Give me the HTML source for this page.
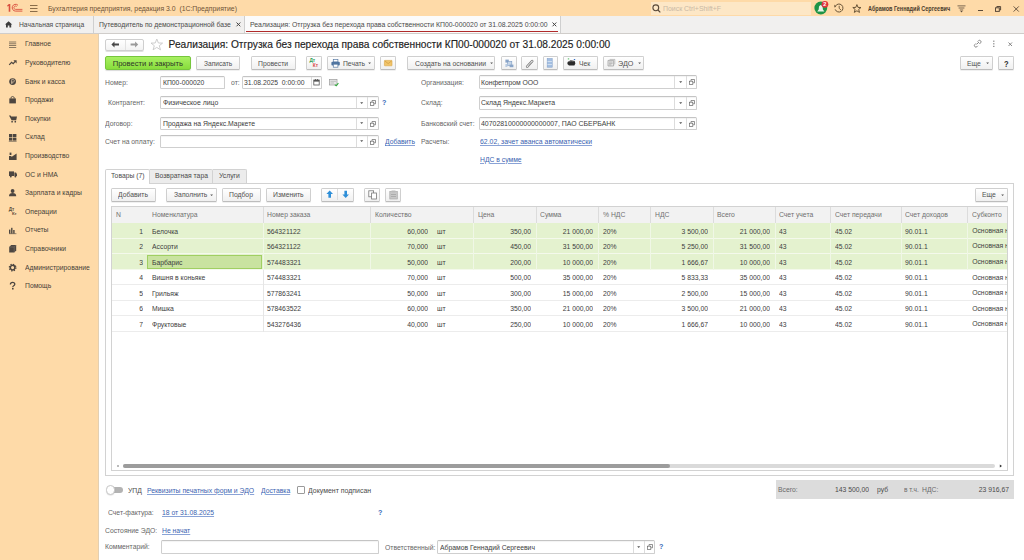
<!DOCTYPE html>
<html><head><meta charset="utf-8"><style>
html,body{margin:0;padding:0;width:1024px;height:560px;overflow:hidden;background:#fff;font-family:"Liberation Sans",sans-serif}
.r{position:absolute}
.t{position:absolute;white-space:pre}
svg{overflow:visible}
</style></head><body>
<div class="r" style="left:0.00px;top:0.00px;width:1024.00px;height:16.00px;background:#FEDAA8"></div>
<div class="r" style="left:0.00px;top:15.50px;width:1024.00px;height:0.50px;background:#e6c9a0"></div>
<svg class="r" style="left:6px;top:3px" width="17" height="10" viewBox="0 0 17 10"><path d="M1.2 2.4 L2.9 1 L4.3 1 L4.3 8.8 L2.7 8.8 L2.7 3.1 L1.2 3.5 Z" fill="#d9503f"/><path d="M12 2.3 A3.4 3.4 0 1 0 9.6 8.1 L16.4 8.1" fill="none" stroke="#d9503f" stroke-width="0.95"/><path d="M10.8 3.5 A1.7 1.7 0 1 0 9.6 6.4 L16.4 6.4" fill="none" stroke="#d9503f" stroke-width="0.85"/></svg>
<svg class="r" style="left:30px;top:5px" width="8" height="7" viewBox="0 0 8 7"><rect x="0" y="0" width="7.5" height="1" fill="#8a6d4a"/><rect x="0" y="3" width="7.5" height="1" fill="#8a6d4a"/><rect x="0" y="6" width="7.5" height="1" fill="#8a6d4a"/></svg>
<div class="t" style="left:47.50px;top:4.10px;font-size:7.64px;line-height:10px;color:#6e5237;transform:scaleX(0.9);transform-origin:0 50%;">Бухгалтерия предприятия, редакция 3.0  (1С:Предприятие)</div>
<div class="r" style="left:650.50px;top:2.00px;width:160.50px;height:13.00px;background:#FDE7C6"></div>
<svg class="r" style="left:652px;top:4px" width="9" height="9" viewBox="0 0 9 9"><circle cx="3.8" cy="3.8" r="2.9" fill="none" stroke="#5a4a3a" stroke-width="1.1"/><line x1="6" y1="6" x2="8.3" y2="8.3" stroke="#5a4a3a" stroke-width="1.2"/></svg>
<div class="t" style="left:662.75px;top:4.10px;font-size:7.69px;line-height:10px;color:#c9b9a5;transform:scaleX(0.9);transform-origin:0 50%;">Поиск Ctrl+Shift+F</div>
<svg class="r" style="left:813px;top:0px" width="16" height="16" viewBox="0 0 16 16"><circle cx="7.8" cy="8" r="6.4" fill="#1e9447"/><path d="M4.2 11.6 L11.4 11.6 L9.9 9.6 L9.6 6.6 Q7.8 3.6 6 6.6 L5.7 9.6 Z" fill="#e6f4e6"/><circle cx="11.9" cy="4.3" r="3.4" fill="#e0353a"/><text x="11.9" y="6.3" font-family="Liberation Sans" font-size="5.6" fill="#fff" text-anchor="middle" font-weight="bold">2</text></svg>
<svg class="r" style="left:834px;top:3px" width="10" height="10" viewBox="0 0 10 10"><path d="M1.4 3.2 A4 4 0 1 1 1.2 6.4" fill="none" stroke="#6a5538" stroke-width="1"/><path d="M0.2 1.6 L2.2 3.8 L0.4 4.4 Z" fill="#6a5538"/><path d="M5.2 2.8 L5.2 5.4 L7 7" fill="none" stroke="#6a5538" stroke-width="0.9"/></svg>
<svg class="r" style="left:852px;top:4px" width="10" height="10" viewBox="0 0 10 10"><path d="M4.9 0.6 L6 3.4 L9 3.5 L6.7 5.4 L7.5 8.4 L4.9 6.8 L2.3 8.4 L3.1 5.4 L0.8 3.5 L3.8 3.4 Z" fill="none" stroke="#6a5538" stroke-width="1"/></svg>
<div class="t" style="left:868.30px;top:4.20px;font-size:6.48px;line-height:10px;color:#4a3b2c;transform:scaleX(0.85);transform-origin:0 50%;font-weight:bold">Абрамов Геннадий Сергеевич</div>
<svg class="r" style="left:957px;top:5px" width="10" height="8" viewBox="0 0 10 8"><rect x="0.5" y="0.5" width="8" height="0.8" fill="#5a4a3a"/><rect x="1.6" y="2.6" width="5.8" height="0.8" fill="#5a4a3a"/><rect x="2.8" y="4.6" width="3.4" height="0.8" fill="#5a4a3a"/><path d="M3.3 6 L5.7 6 L4.5 7.6 Z" fill="#5a4a3a"/></svg>
<div class="r" style="left:977.50px;top:10.00px;width:5.00px;height:1.00px;background:#5a4a3a"></div>
<svg class="r" style="left:995px;top:6px" width="7" height="6" viewBox="0 0 7 6"><rect x="0.5" y="1.8" width="3.8" height="3.6" fill="none" stroke="#5a4a3a" stroke-width="1"/><path d="M1.8 1.6 L1.8 0.5 L5.6 0.5 L5.6 4 L4.5 4" fill="none" stroke="#5a4a3a" stroke-width="1"/></svg>
<svg class="r" style="left:1012.5px;top:5.5px" width="7" height="6" viewBox="0 0 7 6"><path d="M0.6 0.4 L5.8 5.6 M5.8 0.4 L0.6 5.6" stroke="#5a4a3a" stroke-width="0.9"/></svg>
<div class="r" style="left:0.00px;top:16.00px;width:1024.00px;height:17.00px;background:#f1f0ef"></div>
<div class="r" style="left:0.00px;top:33.00px;width:1024.00px;height:1.00px;background:#d0cdca"></div>
<svg class="r" style="left:5px;top:21px" width="8" height="7" viewBox="0 0 8 7"><path d="M3.6 0.2 L7.2 3.4 L6.2 3.4 L6.2 6.6 L4.4 6.6 L4.4 4.6 L2.8 4.6 L2.8 6.6 L1 6.6 L1 3.4 L0 3.4 Z" fill="#3d3d3d"/></svg>
<div class="t" style="left:19.40px;top:20.10px;font-size:7.49px;line-height:10px;color:#4a4a4a;transform:scaleX(0.9);transform-origin:0 50%;">Начальная страница</div>
<div class="r" style="left:93.00px;top:16.00px;width:1.00px;height:17.00px;background:#cfcfcf"></div>
<div class="t" style="left:99.00px;top:20.10px;font-size:7.54px;line-height:10px;color:#4a4a4a;transform:scaleX(0.9);transform-origin:0 50%;">Путеводитель по демонстрационной базе</div>
<svg class="r" style="left:236px;top:22px" width="5" height="5" viewBox="0 0 5 5"><path d="M0.5 0.5 L4.3 4.3 M4.3 0.5 L0.5 4.3" stroke="#444" stroke-width="1"/></svg>
<div class="r" style="left:244.00px;top:16.00px;width:1.00px;height:17.00px;background:#cfcfcf"></div>
<div class="r" style="left:245.00px;top:16.00px;width:315.00px;height:17.00px;background:#fbfbfb"></div>
<div class="t" style="left:250.00px;top:20.10px;font-size:7.63px;line-height:10px;color:#4a4a4a;transform:scaleX(0.9);transform-origin:0 50%;">Реализация: Отгрузка без перехода права собственности КП00-000020 от 31.08.2025 0:00:00</div>
<svg class="r" style="left:551.5px;top:22px" width="5" height="5" viewBox="0 0 5 5"><path d="M0.5 0.5 L4.3 4.3 M4.3 0.5 L0.5 4.3" stroke="#444" stroke-width="1"/></svg>
<div class="r" style="left:246.00px;top:30.80px;width:312.00px;height:1.00px;background:#b02a2a"></div>
<div class="r" style="left:560.00px;top:16.00px;width:1.00px;height:17.00px;background:#cfcfcf"></div>
<div class="r" style="left:0.00px;top:33.50px;width:98.50px;height:526.50px;background:#FEDAA8"></div>
<div class="r" style="left:98.00px;top:33.50px;width:1.00px;height:526.50px;background:#e3cfb2"></div>
<div class="t" style="left:24.75px;top:39.30px;font-size:7.56px;line-height:10px;color:#463f38;transform:scaleX(0.9);transform-origin:0 50%;">Главное</div>
<svg class="r" style="left:9px;top:40.5px" width="8" height="8" viewBox="0 0 8 8"><rect x="0" y="0.6" width="7.2" height="0.8" fill="#6f6250"/><rect x="0" y="2.4" width="7.2" height="0.8" fill="#6f6250"/><rect x="0" y="4.2" width="7.2" height="0.8" fill="#6f6250"/><rect x="0" y="6" width="7.2" height="0.8" fill="#6f6250"/></svg>
<div class="t" style="left:24.75px;top:57.90px;font-size:7.56px;line-height:10px;color:#463f38;transform:scaleX(0.9);transform-origin:0 50%;">Руководителю</div>
<svg class="r" style="left:9px;top:59.1px" width="8" height="8" viewBox="0 0 8 8"><path d="M0.2 5.8 L2.6 3.3 L4.2 4.6 L6.2 2.4" fill="none" stroke="#4d4640" stroke-width="1.2"/><path d="M4.4 1.2 L7.6 1.2 L7.6 4.4 Z" fill="#4d4640"/></svg>
<div class="t" style="left:24.75px;top:76.50px;font-size:7.56px;line-height:10px;color:#463f38;transform:scaleX(0.9);transform-origin:0 50%;">Банк и касса</div>
<svg class="r" style="left:9px;top:77.7px" width="8" height="8" viewBox="0 0 8 8"><circle cx="3.6" cy="3.6" r="3.4" fill="#4d4640"/><path d="M2.6 5.8 L2.6 1.6 L4.2 1.6 Q5.4 1.6 5.4 2.8 Q5.4 4 4.2 4 L2 4 M2 4.9 L4.2 4.9" fill="none" stroke="#c9b59a" stroke-width="0.8"/></svg>
<div class="t" style="left:24.75px;top:95.10px;font-size:7.56px;line-height:10px;color:#463f38;transform:scaleX(0.9);transform-origin:0 50%;">Продажи</div>
<svg class="r" style="left:9px;top:96.3px" width="8" height="8" viewBox="0 0 8 8"><rect x="0.3" y="2.4" width="6.6" height="5" fill="#4d4640"/><path d="M2 2.6 L2 1.3 Q3.6 -0.3 5.2 1.3 L5.2 2.6" fill="none" stroke="#4d4640" stroke-width="0.9"/></svg>
<div class="t" style="left:24.75px;top:113.70px;font-size:7.56px;line-height:10px;color:#463f38;transform:scaleX(0.9);transform-origin:0 50%;">Покупки</div>
<svg class="r" style="left:9px;top:114.9px" width="8" height="8" viewBox="0 0 8 8"><path d="M0 0.4 L1.6 0.4 L2.2 1.6 L8 1.6 L7.2 5.2 L2.6 5.2 Z" fill="#4d4640"/><circle cx="3.1" cy="6.7" r="0.85" fill="#4d4640"/><circle cx="6.3" cy="6.7" r="0.85" fill="#4d4640"/></svg>
<div class="t" style="left:24.75px;top:132.30px;font-size:7.56px;line-height:10px;color:#463f38;transform:scaleX(0.9);transform-origin:0 50%;">Склад</div>
<svg class="r" style="left:9px;top:133.5px" width="8" height="8" viewBox="0 0 8 8"><rect x="0" y="0" width="3.4" height="3" fill="#4d4640"/><rect x="4" y="0" width="3.4" height="3" fill="#4d4640"/><rect x="0" y="3.6" width="3.4" height="3" fill="#4d4640"/><rect x="4" y="3.6" width="3.4" height="3" fill="#4d4640"/><rect x="-0.2" y="6.9" width="7.8" height="0.6" fill="#4d4640"/></svg>
<div class="t" style="left:24.75px;top:150.90px;font-size:7.56px;line-height:10px;color:#463f38;transform:scaleX(0.9);transform-origin:0 50%;">Производство</div>
<svg class="r" style="left:9px;top:152.1px" width="8" height="8" viewBox="0 0 8 8"><path d="M0 8 L0 4 L2.4 4 L2.4 5 L7.6 1.6 L7.6 8 Z" fill="#4d4640"/><rect x="0.6" y="0.6" width="1.8" height="2.4" fill="#4d4640"/></svg>
<div class="t" style="left:24.75px;top:169.50px;font-size:7.56px;line-height:10px;color:#463f38;transform:scaleX(0.9);transform-origin:0 50%;">ОС и НМА</div>
<svg class="r" style="left:9px;top:170.7px" width="8" height="8" viewBox="0 0 8 8"><rect x="0" y="0.4" width="5" height="4.6" fill="#4d4640"/><path d="M5.4 1.6 L7 1.6 L8 3.2 L8 5 L5.4 5 Z" fill="#4d4640"/><circle cx="1.8" cy="5.6" r="0.95" fill="#4d4640"/><circle cx="6.4" cy="5.6" r="0.95" fill="#4d4640"/></svg>
<div class="t" style="left:24.75px;top:188.10px;font-size:7.56px;line-height:10px;color:#463f38;transform:scaleX(0.9);transform-origin:0 50%;">Зарплата и кадры</div>
<svg class="r" style="left:9px;top:189.3px" width="8" height="8" viewBox="0 0 8 8"><circle cx="3.6" cy="2" r="1.9" fill="#4d4640"/><path d="M0 7.2 Q0 4 3.6 4 Q7.2 4 7.2 7.2 Z" fill="#4d4640"/></svg>
<div class="t" style="left:24.75px;top:206.70px;font-size:7.56px;line-height:10px;color:#463f38;transform:scaleX(0.9);transform-origin:0 50%;">Операции</div>
<svg class="r" style="left:9px;top:207.9px" width="8" height="8" viewBox="0 0 8 8"><text x="-0.2" y="2.9" font-size="4.6" fill="#5a4a38" font-family="Liberation Sans" font-weight="bold">Дт</text><text x="3" y="7.1" font-size="4.3" fill="#5a4a38" font-family="Liberation Sans" font-weight="bold">Кт</text></svg>
<div class="t" style="left:24.75px;top:225.30px;font-size:7.56px;line-height:10px;color:#463f38;transform:scaleX(0.9);transform-origin:0 50%;">Отчеты</div>
<svg class="r" style="left:9px;top:226.5px" width="8" height="8" viewBox="0 0 8 8"><rect x="0" y="2.6" width="1.4" height="4" fill="#4d4640"/><rect x="2.1" y="0.8" width="1.4" height="5.8" fill="#4d4640"/><rect x="4.2" y="3" width="1.4" height="3.6" fill="#4d4640"/><rect x="0" y="6.5" width="7.4" height="0.6" fill="#4d4640"/></svg>
<div class="t" style="left:24.75px;top:243.90px;font-size:7.56px;line-height:10px;color:#463f38;transform:scaleX(0.9);transform-origin:0 50%;">Справочники</div>
<svg class="r" style="left:9px;top:245.1px" width="8" height="8" viewBox="0 0 8 8"><path d="M0.2 2 L2.2 0 L7.2 0 L7.2 5.4 L5.2 7.4 L0.2 7.4 Z" fill="#4d4640"/><path d="M5.2 2 L5.2 7.4 M0.2 2 L5.2 2 L7.2 0" fill="none" stroke="#8a7e72" stroke-width="0.5"/></svg>
<div class="t" style="left:24.75px;top:262.50px;font-size:7.56px;line-height:10px;color:#463f38;transform:scaleX(0.9);transform-origin:0 50%;">Администрирование</div>
<svg class="r" style="left:9px;top:263.7px" width="8" height="8" viewBox="0 0 8 8"><circle cx="3.6" cy="3.6" r="2.3" fill="none" stroke="#4d4640" stroke-width="1.5"/><circle cx="3.6" cy="3.6" r="3.3" fill="none" stroke="#4d4640" stroke-width="1.2" stroke-dasharray="1.3 1.29"/></svg>
<div class="t" style="left:24.75px;top:281.10px;font-size:7.56px;line-height:10px;color:#463f38;transform:scaleX(0.9);transform-origin:0 50%;">Помощь</div>
<svg class="r" style="left:9px;top:282.3px" width="8" height="8" viewBox="0 0 8 8"><path d="M1.4 2.4 Q1.4 0.4 3.6 0.4 Q5.8 0.4 5.8 2.3 Q5.8 3.4 4.4 4 Q3.8 4.3 3.8 5.2" fill="none" stroke="#4d4640" stroke-width="1.3"/><rect x="3" y="6" width="1.6" height="1.5" fill="#4d4640"/></svg>
<div class="r" style="left:105.00px;top:38.50px;width:39.00px;height:12.00px;background:linear-gradient(#fff,#f3f3f3);border:1px solid #cfcfcf;border-radius:2px;box-sizing:border-box;box-shadow:0 1px 0 #e0e0e0"></div>
<div class="r" style="left:124.50px;top:39.50px;width:1.00px;height:10.00px;background:#e2e2e2"></div>
<svg class="r" style="left:111px;top:41px" width="9" height="7" viewBox="0 0 9 7"><path d="M0.4 3.5 L3.5 0.6 L3.5 2.6 L8 2.6 L8 4.4 L3.5 4.4 L3.5 6.4 Z" fill="#474747"/></svg>
<svg class="r" style="left:130px;top:41px" width="9" height="7" viewBox="0 0 9 7"><path d="M8.2 3.5 L5.1 0.6 L5.1 2.6 L0.6 2.6 L0.6 4.4 L5.1 4.4 L5.1 6.4 Z" fill="#9a9a9a" transform="scale(1,1)"/></svg>
<svg class="r" style="left:150px;top:38px" width="14" height="13" viewBox="0 0 14 13"><path d="M6.8 1 L8.4 5 L12.6 5.1 L9.3 7.7 L10.5 11.8 L6.8 9.4 L3.1 11.8 L4.3 7.7 L1 5.1 L5.2 5 Z" fill="none" stroke="#c8c8c8" stroke-width="0.9"/></svg>
<div class="t" style="left:168.60px;top:37.50px;font-size:10.20px;line-height:14px;color:#222222;transform-origin:0 50%;-webkit-text-stroke:0.15px #222">Реализация: Отгрузка без перехода права собственности КП00-000020 от 31.08.2025 0:00:00</div>
<svg class="r" style="left:973px;top:40px" width="10" height="8" viewBox="0 0 10 8"><path d="M3.6 4.4 L6 2" stroke="#7a7a7a" stroke-width="0.9"/><path d="M4.6 1.6 L5.6 0.6 Q6.6 -0.2 7.6 0.8 Q8.6 1.8 7.6 2.8 L6.4 4" fill="none" stroke="#7a7a7a" stroke-width="0.9"/><path d="M4.8 5.8 L3.8 6.8 Q2.8 7.6 1.8 6.6 Q0.8 5.6 1.8 4.6 L3 3.4" fill="none" stroke="#7a7a7a" stroke-width="0.9"/></svg>
<svg class="r" style="left:993px;top:40px" width="2" height="8" viewBox="0 0 2 8"><rect x="0.2" y="0.6" width="1.2" height="1.2" fill="#7a7a7a"/><rect x="0.2" y="3.2" width="1.2" height="1.2" fill="#7a7a7a"/><rect x="0.2" y="5.8" width="1.2" height="1.2" fill="#7a7a7a"/></svg>
<svg class="r" style="left:1008px;top:41.5px" width="5" height="5" viewBox="0 0 5 5"><path d="M0.5 0.5 L4 4 M4 0.5 L0.5 4" stroke="#7a7a7a" stroke-width="0.9"/></svg>
<div class="r" style="left:105.00px;top:56.00px;width:86.00px;height:14.00px;background:linear-gradient(#a8f062,#88dd3c);border:1px solid #76c63c;border-radius:2px;box-sizing:border-box;box-shadow:0 1px 1px rgba(0,0,0,0.15)"></div>
<div class="t" style="left:112.70px;top:58.60px;font-size:7.60px;line-height:10px;color:#2e3628;transform-origin:0 50%;">Провести и закрыть</div>
<div class="r" style="left:196.00px;top:56.00px;width:44.00px;height:14.00px;background:linear-gradient(#ffffff,#f0f0f0);border:1px solid #cfcfcf;border-bottom-color:#bdbdbd;border-radius:1.5px;box-sizing:border-box;box-shadow:0 1px 0 rgba(0,0,0,0.06)"></div>
<div class="t" style="left:203.70px;top:58.60px;font-size:7.36px;line-height:10px;color:#505050;transform:scaleX(0.9);transform-origin:0 50%;">Записать</div>
<div class="r" style="left:251.00px;top:56.00px;width:45.00px;height:14.00px;background:linear-gradient(#ffffff,#f0f0f0);border:1px solid #cfcfcf;border-bottom-color:#bdbdbd;border-radius:1.5px;box-sizing:border-box;box-shadow:0 1px 0 rgba(0,0,0,0.06)"></div>
<div class="t" style="left:258.00px;top:58.60px;font-size:7.59px;line-height:10px;color:#505050;transform:scaleX(0.9);transform-origin:0 50%;">Провести</div>
<div class="r" style="left:306.00px;top:56.00px;width:16.00px;height:14.00px;background:linear-gradient(#ffffff,#f0f0f0);border:1px solid #cfcfcf;border-bottom-color:#bdbdbd;border-radius:1.5px;box-sizing:border-box;box-shadow:0 1px 0 rgba(0,0,0,0.06)"></div>
<svg class="r" style="left:308px;top:58px" width="12" height="10" viewBox="0 0 12 10"><text x="1.4" y="4.4" font-size="4.8" fill="#2f9e55" font-family="Liberation Sans" font-weight="bold">Дт</text><text x="4.8" y="9" font-size="4.8" fill="#d84848" font-family="Liberation Sans" font-weight="bold">Кт</text></svg>
<div class="r" style="left:327.00px;top:56.00px;width:48.00px;height:14.00px;background:linear-gradient(#ffffff,#f0f0f0);border:1px solid #cfcfcf;border-bottom-color:#bdbdbd;border-radius:1.5px;box-sizing:border-box;box-shadow:0 1px 0 rgba(0,0,0,0.06)"></div>
<svg class="r" style="left:330.5px;top:58.5px" width="10" height="9" viewBox="0 0 10 9"><rect x="2.3" y="0.6" width="4.6" height="2.4" fill="#fff" stroke="#5a7ca5" stroke-width="0.7"/><rect x="0.4" y="2.8" width="8.4" height="3.8" rx="1" fill="#4f74a0"/><rect x="2.3" y="5.2" width="4.6" height="3" fill="#fff" stroke="#5a7ca5" stroke-width="0.7"/></svg>
<div class="t" style="left:342.70px;top:58.60px;font-size:7.50px;line-height:10px;color:#505050;transform:scaleX(0.9);transform-origin:0 50%;">Печать</div>
<svg class="r" style="left:368px;top:62px" width="4" height="3" viewBox="0 0 4 3"><path d="M0.2 0.6 L3 0.6 L1.6 2 Z" fill="#555"/></svg>
<div class="r" style="left:380.00px;top:56.00px;width:16.00px;height:14.00px;background:linear-gradient(#ffffff,#f0f0f0);border:1px solid #cfcfcf;border-bottom-color:#bdbdbd;border-radius:1.5px;box-sizing:border-box;box-shadow:0 1px 0 rgba(0,0,0,0.06)"></div>
<svg class="r" style="left:383.8px;top:60px" width="9" height="7" viewBox="0 0 9 7"><rect x="0.4" y="0.4" width="7.6" height="5.4" rx="0.5" fill="#f1c469" stroke="#d9a543" stroke-width="0.6"/><path d="M0.8 0.9 L4.2 3.6 L7.6 0.9" fill="none" stroke="#c8923a" stroke-width="0.6"/></svg>
<div class="r" style="left:407.00px;top:56.00px;width:88.00px;height:14.00px;background:linear-gradient(#ffffff,#f0f0f0);border:1px solid #cfcfcf;border-bottom-color:#bdbdbd;border-radius:1.5px;box-sizing:border-box;box-shadow:0 1px 0 rgba(0,0,0,0.06)"></div>
<div class="t" style="left:414.60px;top:58.60px;font-size:7.61px;line-height:10px;color:#505050;transform:scaleX(0.9);transform-origin:0 50%;">Создать на основании</div>
<svg class="r" style="left:489.5px;top:62px" width="4" height="3" viewBox="0 0 4 3"><path d="M0.2 0.6 L3 0.6 L1.6 2 Z" fill="#555"/></svg>
<div class="r" style="left:501.00px;top:56.00px;width:16.00px;height:14.00px;background:linear-gradient(#ffffff,#f0f0f0);border:1px solid #cfcfcf;border-bottom-color:#bdbdbd;border-radius:1.5px;box-sizing:border-box;box-shadow:0 1px 0 rgba(0,0,0,0.06)"></div>
<svg class="r" style="left:504.5px;top:58.5px" width="9" height="9" viewBox="0 0 9 9"><rect x="0.4" y="0.6" width="3.4" height="3" fill="#8aa5c8"/><rect x="2.6" y="2.4" width="4.2" height="4" fill="#c5d5e8" stroke="#7d9bc2" stroke-width="0.6"/><rect x="4.6" y="5.6" width="3.8" height="2.6" fill="#8aa5c8"/><rect x="0.4" y="5" width="2" height="3" fill="#b8cbe2"/></svg>
<div class="r" style="left:521.00px;top:56.00px;width:17.00px;height:14.00px;background:linear-gradient(#ffffff,#f0f0f0);border:1px solid #cfcfcf;border-bottom-color:#bdbdbd;border-radius:1.5px;box-sizing:border-box;box-shadow:0 1px 0 rgba(0,0,0,0.06)"></div>
<svg class="r" style="left:524.5px;top:58.5px" width="10" height="9" viewBox="0 0 10 9"><path d="M2.2 7.6 L7.2 2.2" stroke="#7a7a7a" stroke-width="2.6" stroke-linecap="round"/><path d="M2.2 7.6 L7.2 2.2" stroke="#f4f4f4" stroke-width="1.1" stroke-linecap="round"/><path d="M3.4 6.6 L6.4 3.2" stroke="#7a7a7a" stroke-width="0.6"/></svg>
<div class="r" style="left:543.00px;top:56.00px;width:15.00px;height:14.00px;background:linear-gradient(#ffffff,#f0f0f0);border:1px solid #cfcfcf;border-bottom-color:#bdbdbd;border-radius:1.5px;box-sizing:border-box;box-shadow:0 1px 0 rgba(0,0,0,0.06)"></div>
<svg class="r" style="left:546px;top:58px" width="8" height="10" viewBox="0 0 8 10"><rect x="1.2" y="0.6" width="5" height="8.6" fill="#a4bfe2" stroke="#86a3cc" stroke-width="0.6"/><rect x="1.5" y="3" width="4.4" height="0.7" fill="#e4ecf6"/><rect x="1.5" y="6" width="4.4" height="0.7" fill="#e4ecf6"/></svg>
<div class="r" style="left:563.00px;top:56.00px;width:35.00px;height:14.00px;background:linear-gradient(#ffffff,#f0f0f0);border:1px solid #cfcfcf;border-bottom-color:#bdbdbd;border-radius:1.5px;box-sizing:border-box;box-shadow:0 1px 0 rgba(0,0,0,0.06)"></div>
<svg class="r" style="left:566.5px;top:58px" width="10" height="9" viewBox="0 0 10 9"><path d="M0.6 4 L3.6 2.2 L7.6 3 L8.4 5.6 L7.4 7.6 L2 7.6 L0.4 6 Z" fill="#2b2b2b"/><path d="M2.2 3.8 L4 2.8 L6.6 3.4" fill="none" stroke="#9a9a9a" stroke-width="0.6"/><rect x="0.8" y="0.4" width="1.4" height="1" fill="#49b85a"/><rect x="6.8" y="1" width="1.4" height="1.1" fill="#3a72c8"/></svg>
<div class="t" style="left:579.20px;top:58.60px;font-size:7.56px;line-height:10px;color:#505050;transform:scaleX(0.9);transform-origin:0 50%;">Чек</div>
<div class="r" style="left:603.00px;top:56.00px;width:41.00px;height:14.00px;background:linear-gradient(#ffffff,#f0f0f0);border:1px solid #cfcfcf;border-bottom-color:#bdbdbd;border-radius:1.5px;box-sizing:border-box;box-shadow:0 1px 0 rgba(0,0,0,0.06)"></div>
<svg class="r" style="left:606.5px;top:59px" width="9" height="8" viewBox="0 0 9 8"><path d="M1 1.4 L6.6 1.4 L6.6 7 L1 7 Z" fill="#e8e8e8" stroke="#9a9a9a" stroke-width="0.7"/><path d="M2.6 0.4 L7.8 0.4 L7.8 5.4" fill="none" stroke="#9a9a9a" stroke-width="0.6"/><path d="M2 3 L5.6 3 M2 4.4 L5.6 4.4 M2 5.8 L4.4 5.8" stroke="#8a8a8a" stroke-width="0.5"/></svg>
<div class="t" style="left:618.40px;top:58.60px;font-size:8.00px;line-height:10px;color:#505050;transform:scaleX(0.9);transform-origin:0 50%;">ЭДО</div>
<svg class="r" style="left:638px;top:62px" width="4" height="3" viewBox="0 0 4 3"><path d="M0.2 0.6 L3 0.6 L1.6 2 Z" fill="#555"/></svg>
<div class="r" style="left:960.00px;top:56.00px;width:33.00px;height:14.00px;background:linear-gradient(#ffffff,#f0f0f0);border:1px solid #cfcfcf;border-bottom-color:#bdbdbd;border-radius:1.5px;box-sizing:border-box;box-shadow:0 1px 0 rgba(0,0,0,0.06)"></div>
<div class="t" style="left:966.50px;top:58.60px;font-size:7.56px;line-height:10px;color:#505050;transform:scaleX(0.9);transform-origin:0 50%;">Еще</div>
<svg class="r" style="left:986px;top:62px" width="4" height="3" viewBox="0 0 4 3"><path d="M0.2 0.6 L3 0.6 L1.6 2 Z" fill="#555"/></svg>
<div class="r" style="left:998.00px;top:56.00px;width:16.00px;height:14.00px;background:linear-gradient(#ffffff,#f0f0f0);border:1px solid #cfcfcf;border-bottom-color:#bdbdbd;border-radius:1.5px;box-sizing:border-box;box-shadow:0 1px 0 rgba(0,0,0,0.06)"></div>
<div class="t" style="left:1003.50px;top:58.60px;font-size:8.33px;line-height:10px;color:#333;transform:scaleX(0.9);transform-origin:0 50%;font-weight:bold">?</div>
<div class="t" style="left:104.80px;top:77.60px;font-size:7.56px;line-height:10px;color:#666666;transform:scaleX(0.9);transform-origin:0 50%;">Номер:</div>
<div class="r" style="left:160.00px;top:76.00px;width:65.00px;height:13.00px;background:#fff;border:1px solid #cfcfcf;border-top-color:#c4c4c4;border-radius:1.5px;box-sizing:border-box;box-shadow:inset 0 1px 1px rgba(0,0,0,0.05)"></div>
<div class="t" style="left:162.70px;top:77.60px;font-size:7.56px;line-height:10px;color:#3d3d3d;transform:scaleX(0.9);transform-origin:0 50%;">КП00-000020</div>
<div class="t" style="left:230.60px;top:77.60px;font-size:7.56px;line-height:10px;color:#666666;transform:scaleX(0.9);transform-origin:0 50%;">от:</div>
<div class="r" style="left:242.00px;top:76.00px;width:80.00px;height:13.00px;background:#fff;border:1px solid #cfcfcf;border-top-color:#c4c4c4;border-radius:1.5px;box-sizing:border-box;box-shadow:inset 0 1px 1px rgba(0,0,0,0.05)"></div>
<div class="r" style="left:311.00px;top:77.00px;width:1.00px;height:11.00px;background:#dcdcdc"></div>
<div class="t" style="left:244.00px;top:77.60px;font-size:7.56px;line-height:10px;color:#3d3d3d;transform:scaleX(0.9);transform-origin:0 50%;">31.08.2025  0:00:00</div>
<svg class="r" style="left:313px;top:78.5px" width="8" height="7" viewBox="0 0 8 7"><rect x="0.8" y="1" width="5.4" height="5" fill="none" stroke="#555" stroke-width="0.8"/><rect x="0.8" y="1" width="5.4" height="1.6" fill="#555"/><rect x="2" y="0" width="0.8" height="1.5" fill="#555"/><rect x="4.2" y="0" width="0.8" height="1.5" fill="#555"/></svg>
<svg class="r" style="left:329px;top:77.5px" width="10" height="9" viewBox="0 0 10 9"><rect x="0.5" y="1.5" width="7.5" height="5.5" fill="#e6e6e6" stroke="#9a9a9a" stroke-width="0.7"/><path d="M1.5 3.3 L7 3.3 M1.5 5 L5 5" stroke="#9a9a9a" stroke-width="0.5"/><path d="M5.8 6.6 L7.2 7.8 L9.4 5.2" fill="none" stroke="#2eaa3a" stroke-width="1.1"/></svg>
<div class="t" style="left:108.00px;top:98.40px;font-size:7.56px;line-height:10px;color:#666666;transform:scaleX(0.9);transform-origin:0 50%;">Контрагент:</div>
<div class="r" style="left:160.00px;top:96.00px;width:219.00px;height:13.00px;background:#fff;border:1px solid #cfcfcf;border-top-color:#c4c4c4;border-radius:1.5px;box-sizing:border-box;box-shadow:inset 0 1px 1px rgba(0,0,0,0.05)"></div>
<div class="r" style="left:356.00px;top:97.00px;width:1.00px;height:11.00px;background:#dcdcdc"></div>
<div class="r" style="left:367.00px;top:97.00px;width:1.00px;height:11.00px;background:#dcdcdc"></div>
<svg class="r" style="left:360.1px;top:101.7px" width="4" height="3" viewBox="0 0 4 3"><path d="M0.2 0.3 L3.2 0.3 L1.7 2 Z" fill="#555"/></svg>
<svg class="r" style="left:370.2px;top:99.9px" width="6" height="6" viewBox="0 0 6 6"><rect x="0.5" y="2.2" width="3.3" height="3.3" fill="none" stroke="#666" stroke-width="0.7"/><path d="M2 2 L2 0.5 L5.5 0.5 L5.5 3.8 L4 3.8" fill="none" stroke="#666" stroke-width="0.7"/></svg>
<div class="t" style="left:162.70px;top:98.40px;font-size:7.68px;line-height:10px;color:#3d3d3d;transform:scaleX(0.9);transform-origin:0 50%;">Физическое лицо</div>
<div class="t" style="left:382.20px;top:97.90px;font-size:8.00px;line-height:10px;color:#3a6ab8;transform:scaleX(0.9);transform-origin:0 50%;font-weight:bold">?</div>
<div class="t" style="left:104.80px;top:119.10px;font-size:7.56px;line-height:10px;color:#666666;transform:scaleX(0.9);transform-origin:0 50%;">Договор:</div>
<div class="r" style="left:160.00px;top:117.00px;width:219.00px;height:13.00px;background:#fff;border:1px solid #cfcfcf;border-top-color:#c4c4c4;border-radius:1.5px;box-sizing:border-box;box-shadow:inset 0 1px 1px rgba(0,0,0,0.05)"></div>
<div class="r" style="left:356.00px;top:118.00px;width:1.00px;height:11.00px;background:#dcdcdc"></div>
<div class="r" style="left:367.00px;top:118.00px;width:1.00px;height:11.00px;background:#dcdcdc"></div>
<svg class="r" style="left:360.1px;top:122.3px" width="4" height="3" viewBox="0 0 4 3"><path d="M0.2 0.3 L3.2 0.3 L1.7 2 Z" fill="#555"/></svg>
<svg class="r" style="left:370.2px;top:120.5px" width="6" height="6" viewBox="0 0 6 6"><rect x="0.5" y="2.2" width="3.3" height="3.3" fill="none" stroke="#666" stroke-width="0.7"/><path d="M2 2 L2 0.5 L5.5 0.5 L5.5 3.8 L4 3.8" fill="none" stroke="#666" stroke-width="0.7"/></svg>
<div class="t" style="left:162.70px;top:119.10px;font-size:7.64px;line-height:10px;color:#3d3d3d;transform:scaleX(0.9);transform-origin:0 50%;">Продажа на Яндекс.Маркете</div>
<div class="t" style="left:104.80px;top:137.10px;font-size:7.56px;line-height:10px;color:#666666;transform:scaleX(0.9);transform-origin:0 50%;">Счет на оплату:</div>
<div class="r" style="left:160.00px;top:135.00px;width:219.00px;height:13.00px;background:#fff;border:1px solid #cfcfcf;border-top-color:#c4c4c4;border-radius:1.5px;box-sizing:border-box;box-shadow:inset 0 1px 1px rgba(0,0,0,0.05)"></div>
<div class="r" style="left:356.00px;top:136.00px;width:1.00px;height:11.00px;background:#dcdcdc"></div>
<div class="r" style="left:367.00px;top:136.00px;width:1.00px;height:11.00px;background:#dcdcdc"></div>
<svg class="r" style="left:360.1px;top:140.3px" width="4" height="3" viewBox="0 0 4 3"><path d="M0.2 0.3 L3.2 0.3 L1.7 2 Z" fill="#555"/></svg>
<svg class="r" style="left:370.2px;top:138.5px" width="6" height="6" viewBox="0 0 6 6"><rect x="0.5" y="2.2" width="3.3" height="3.3" fill="none" stroke="#666" stroke-width="0.7"/><path d="M2 2 L2 0.5 L5.5 0.5 L5.5 3.8 L4 3.8" fill="none" stroke="#666" stroke-width="0.7"/></svg>
<div class="t" style="left:385.10px;top:137.10px;font-size:7.56px;line-height:10px;color:#3a5fb0;transform:scaleX(0.9);transform-origin:0 50%;text-decoration:underline;text-decoration-color:#8aa3d6">Добавить</div>
<div class="t" style="left:420.70px;top:77.70px;font-size:7.56px;line-height:10px;color:#666666;transform:scaleX(0.9);transform-origin:0 50%;">Организация:</div>
<div class="r" style="left:479.00px;top:75.00px;width:218.00px;height:14.00px;background:#fff;border:1px solid #cfcfcf;border-top-color:#c4c4c4;border-radius:1.5px;box-sizing:border-box;box-shadow:inset 0 1px 1px rgba(0,0,0,0.05)"></div>
<div class="r" style="left:674.00px;top:76.00px;width:1.00px;height:12.00px;background:#dcdcdc"></div>
<div class="r" style="left:686.00px;top:76.00px;width:1.00px;height:12.00px;background:#dcdcdc"></div>
<svg class="r" style="left:678.7px;top:80.8px" width="4" height="3" viewBox="0 0 4 3"><path d="M0.2 0.3 L3.2 0.3 L1.7 2 Z" fill="#555"/></svg>
<svg class="r" style="left:688.9px;top:79px" width="6" height="6" viewBox="0 0 6 6"><rect x="0.5" y="2.2" width="3.3" height="3.3" fill="none" stroke="#666" stroke-width="0.7"/><path d="M2 2 L2 0.5 L5.5 0.5 L5.5 3.8 L4 3.8" fill="none" stroke="#666" stroke-width="0.7"/></svg>
<div class="t" style="left:480.70px;top:77.70px;font-size:7.56px;line-height:10px;color:#3d3d3d;transform:scaleX(0.9);transform-origin:0 50%;">Конфетпром ООО</div>
<div class="t" style="left:420.70px;top:98.40px;font-size:7.56px;line-height:10px;color:#666666;transform:scaleX(0.9);transform-origin:0 50%;">Склад:</div>
<div class="r" style="left:479.00px;top:96.00px;width:218.00px;height:14.00px;background:#fff;border:1px solid #cfcfcf;border-top-color:#c4c4c4;border-radius:1.5px;box-sizing:border-box;box-shadow:inset 0 1px 1px rgba(0,0,0,0.05)"></div>
<div class="r" style="left:674.00px;top:97.00px;width:1.00px;height:12.00px;background:#dcdcdc"></div>
<div class="r" style="left:686.00px;top:97.00px;width:1.00px;height:12.00px;background:#dcdcdc"></div>
<svg class="r" style="left:678.7px;top:101.7px" width="4" height="3" viewBox="0 0 4 3"><path d="M0.2 0.3 L3.2 0.3 L1.7 2 Z" fill="#555"/></svg>
<svg class="r" style="left:688.9px;top:99.9px" width="6" height="6" viewBox="0 0 6 6"><rect x="0.5" y="2.2" width="3.3" height="3.3" fill="none" stroke="#666" stroke-width="0.7"/><path d="M2 2 L2 0.5 L5.5 0.5 L5.5 3.8 L4 3.8" fill="none" stroke="#666" stroke-width="0.7"/></svg>
<div class="t" style="left:480.70px;top:98.40px;font-size:7.68px;line-height:10px;color:#3d3d3d;transform:scaleX(0.9);transform-origin:0 50%;">Склад Яндекс.Маркета</div>
<div class="t" style="left:420.70px;top:118.90px;font-size:7.56px;line-height:10px;color:#666666;transform:scaleX(0.9);transform-origin:0 50%;">Банковский счет:</div>
<div class="r" style="left:479.00px;top:117.00px;width:218.00px;height:13.00px;background:#fff;border:1px solid #cfcfcf;border-top-color:#c4c4c4;border-radius:1.5px;box-sizing:border-box;box-shadow:inset 0 1px 1px rgba(0,0,0,0.05)"></div>
<div class="r" style="left:674.00px;top:118.00px;width:1.00px;height:11.00px;background:#dcdcdc"></div>
<div class="r" style="left:686.00px;top:118.00px;width:1.00px;height:11.00px;background:#dcdcdc"></div>
<svg class="r" style="left:678.7px;top:122.3px" width="4" height="3" viewBox="0 0 4 3"><path d="M0.2 0.3 L3.2 0.3 L1.7 2 Z" fill="#555"/></svg>
<svg class="r" style="left:688.9px;top:120.5px" width="6" height="6" viewBox="0 0 6 6"><rect x="0.5" y="2.2" width="3.3" height="3.3" fill="none" stroke="#666" stroke-width="0.7"/><path d="M2 2 L2 0.5 L5.5 0.5 L5.5 3.8 L4 3.8" fill="none" stroke="#666" stroke-width="0.7"/></svg>
<div class="t" style="left:480.70px;top:118.90px;font-size:7.69px;line-height:10px;color:#3d3d3d;transform:scaleX(0.9);transform-origin:0 50%;">40702810000000000007, ПАО СБЕРБАНК</div>
<div class="t" style="left:420.70px;top:137.30px;font-size:7.56px;line-height:10px;color:#666666;transform:scaleX(0.9);transform-origin:0 50%;">Расчеты:</div>
<div class="t" style="left:479.90px;top:137.30px;font-size:7.68px;line-height:10px;color:#3a5fb0;transform:scaleX(0.9);transform-origin:0 50%;text-decoration:underline;text-decoration-color:#8aa3d6">62.02, зачет аванса автоматически</div>
<div class="t" style="left:479.90px;top:154.50px;font-size:7.56px;line-height:10px;color:#3a5fb0;transform:scaleX(0.9);transform-origin:0 50%;text-decoration:underline;text-decoration-color:#8aa3d6">НДС в сумме</div>
<div class="r" style="left:105.30px;top:183.30px;width:908.70px;height:292.50px;border:1px solid #d2d2d2;box-sizing:border-box;background:#fff"></div>
<div class="r" style="left:105.30px;top:168.50px;width:44.30px;height:15.80px;background:#fff;border:1px solid #d2d2d2;border-bottom:none;box-sizing:border-box;border-radius:2px 2px 0 0"></div>
<div class="r" style="left:149.60px;top:168.50px;width:63.80px;height:14.80px;background:#ececec;border:1px solid #d2d2d2;border-left:none;border-bottom:none;box-sizing:border-box;border-radius:0 2px 0 0"></div>
<div class="r" style="left:213.40px;top:168.50px;width:33.30px;height:14.80px;background:#ececec;border:1px solid #d2d2d2;border-left:none;border-bottom:none;box-sizing:border-box;border-radius:0 2px 0 0"></div>
<div class="t" style="left:111.25px;top:171.40px;font-size:7.56px;line-height:10px;color:#4a4a4a;transform:scaleX(0.9);transform-origin:0 50%;">Товары (7)</div>
<div class="t" style="left:155.00px;top:171.40px;font-size:7.56px;line-height:10px;color:#4a4a4a;transform:scaleX(0.9);transform-origin:0 50%;">Возвратная тара</div>
<div class="t" style="left:219.00px;top:171.40px;font-size:7.56px;line-height:10px;color:#4a4a4a;transform:scaleX(0.9);transform-origin:0 50%;">Услуги</div>
<div class="r" style="left:111.00px;top:188.00px;width:45.00px;height:14.00px;background:linear-gradient(#ffffff,#f0f0f0);border:1px solid #cfcfcf;border-bottom-color:#bdbdbd;border-radius:1.5px;box-sizing:border-box;box-shadow:0 1px 0 rgba(0,0,0,0.06)"></div>
<div class="t" style="left:118.00px;top:190.20px;font-size:7.56px;line-height:10px;color:#505050;transform:scaleX(0.9);transform-origin:0 50%;">Добавить</div>
<div class="r" style="left:166.00px;top:188.00px;width:51.00px;height:14.00px;background:linear-gradient(#ffffff,#f0f0f0);border:1px solid #cfcfcf;border-bottom-color:#bdbdbd;border-radius:1.5px;box-sizing:border-box;box-shadow:0 1px 0 rgba(0,0,0,0.06)"></div>
<div class="t" style="left:173.75px;top:190.20px;font-size:7.56px;line-height:10px;color:#505050;transform:scaleX(0.9);transform-origin:0 50%;">Заполнить</div>
<svg class="r" style="left:210px;top:193.5px" width="4" height="3" viewBox="0 0 4 3"><path d="M0.2 0.6 L3 0.6 L1.6 2 Z" fill="#555"/></svg>
<div class="r" style="left:222.00px;top:188.00px;width:39.00px;height:14.00px;background:linear-gradient(#ffffff,#f0f0f0);border:1px solid #cfcfcf;border-bottom-color:#bdbdbd;border-radius:1.5px;box-sizing:border-box;box-shadow:0 1px 0 rgba(0,0,0,0.06)"></div>
<div class="t" style="left:229.00px;top:190.20px;font-size:7.56px;line-height:10px;color:#505050;transform:scaleX(0.9);transform-origin:0 50%;">Подбор</div>
<div class="r" style="left:266.00px;top:188.00px;width:45.00px;height:14.00px;background:linear-gradient(#ffffff,#f0f0f0);border:1px solid #cfcfcf;border-bottom-color:#bdbdbd;border-radius:1.5px;box-sizing:border-box;box-shadow:0 1px 0 rgba(0,0,0,0.06)"></div>
<div class="t" style="left:272.60px;top:190.20px;font-size:7.56px;line-height:10px;color:#505050;transform:scaleX(0.9);transform-origin:0 50%;">Изменить</div>
<div class="r" style="left:321.00px;top:188.00px;width:33.00px;height:14.00px;background:linear-gradient(#ffffff,#f0f0f0);border:1px solid #cfcfcf;border-bottom-color:#bdbdbd;border-radius:1.5px;box-sizing:border-box;box-shadow:0 1px 0 rgba(0,0,0,0.06)"></div>
<div class="r" style="left:337.20px;top:188.80px;width:1.00px;height:11.70px;background:#dcdcdc"></div>
<svg class="r" style="left:325.5px;top:190px" width="8" height="9" viewBox="0 0 8 9"><path d="M3.7 0.5 L7 4 L5 4 L5 7.8 L2.4 7.8 L2.4 4 L0.4 4 Z" fill="#2f8fd8"/></svg>
<svg class="r" style="left:341.5px;top:190px" width="8" height="9" viewBox="0 0 8 9"><path d="M3.7 8 L7 4.5 L5 4.5 L5 0.7 L2.4 0.7 L2.4 4.5 L0.4 4.5 Z" fill="#2f8fd8"/></svg>
<div class="r" style="left:364.00px;top:188.00px;width:16.00px;height:14.00px;background:linear-gradient(#ffffff,#f0f0f0);border:1px solid #cfcfcf;border-bottom-color:#bdbdbd;border-radius:1.5px;box-sizing:border-box;box-shadow:0 1px 0 rgba(0,0,0,0.06)"></div>
<svg class="r" style="left:367.5px;top:189.5px" width="10" height="10" viewBox="0 0 10 10"><rect x="0.8" y="0.8" width="4.8" height="6" fill="#fff" stroke="#777" stroke-width="0.8"/><rect x="3.6" y="3" width="4.8" height="6" fill="#fff" stroke="#777" stroke-width="0.8"/></svg>
<div class="r" style="left:385.00px;top:188.00px;width:16.00px;height:14.00px;background:linear-gradient(#ffffff,#f0f0f0);border:1px solid #cfcfcf;border-bottom-color:#bdbdbd;border-radius:1.5px;box-sizing:border-box;box-shadow:0 1px 0 rgba(0,0,0,0.06)"></div>
<svg class="r" style="left:388.5px;top:189.5px" width="10" height="10" viewBox="0 0 10 10"><rect x="0.8" y="1.5" width="7.5" height="7.5" fill="#c8c8c8" stroke="#aaa" stroke-width="0.7"/><rect x="2.5" y="0.5" width="4" height="2" fill="#bbb"/><path d="M2 4.5 L7 4.5 M2 6.5 L7 6.5" stroke="#999" stroke-width="0.6"/></svg>
<div class="r" style="left:975.00px;top:188.00px;width:33.00px;height:14.00px;background:linear-gradient(#ffffff,#f0f0f0);border:1px solid #cfcfcf;border-bottom-color:#bdbdbd;border-radius:1.5px;box-sizing:border-box;box-shadow:0 1px 0 rgba(0,0,0,0.06)"></div>
<div class="t" style="left:981.50px;top:190.20px;font-size:7.56px;line-height:10px;color:#505050;transform:scaleX(0.9);transform-origin:0 50%;">Еще</div>
<svg class="r" style="left:1001px;top:193.5px" width="4" height="3" viewBox="0 0 4 3"><path d="M0.2 0.6 L3 0.6 L1.6 2 Z" fill="#555"/></svg>
<div class="r" style="left:111.30px;top:206.00px;width:896.70px;height:265.00px;border:1px solid #d2d2d2;box-sizing:border-box;background:#fff"></div>
<div class="r" style="left:112.30px;top:207.00px;width:894.70px;height:16.00px;background:#f2f2f2"></div>
<div class="r" style="left:112.30px;top:222.50px;width:894.70px;height:0.80px;background:#dedede"></div>
<div class="r" style="left:262.60px;top:207.00px;width:0.80px;height:16.00px;background:#dcdcdc"></div>
<div class="r" style="left:369.90px;top:207.00px;width:0.80px;height:16.00px;background:#dcdcdc"></div>
<div class="r" style="left:473.20px;top:207.00px;width:0.80px;height:16.00px;background:#dcdcdc"></div>
<div class="r" style="left:535.70px;top:207.00px;width:0.80px;height:16.00px;background:#dcdcdc"></div>
<div class="r" style="left:598.20px;top:207.00px;width:0.80px;height:16.00px;background:#dcdcdc"></div>
<div class="r" style="left:649.60px;top:207.00px;width:0.80px;height:16.00px;background:#dcdcdc"></div>
<div class="r" style="left:712.70px;top:207.00px;width:0.80px;height:16.00px;background:#dcdcdc"></div>
<div class="r" style="left:774.60px;top:207.00px;width:0.80px;height:16.00px;background:#dcdcdc"></div>
<div class="r" style="left:829.70px;top:207.00px;width:0.80px;height:16.00px;background:#dcdcdc"></div>
<div class="r" style="left:900.50px;top:207.00px;width:0.80px;height:16.00px;background:#dcdcdc"></div>
<div class="r" style="left:967.20px;top:207.00px;width:0.80px;height:16.00px;background:#dcdcdc"></div>
<div class="t" style="left:115.60px;top:210.30px;font-size:7.56px;line-height:10px;color:#707070;transform:scaleX(0.9);transform-origin:0 50%;">N</div>
<div class="t" style="left:151.90px;top:210.30px;font-size:7.56px;line-height:10px;color:#707070;transform:scaleX(0.9);transform-origin:0 50%;">Номенклатура</div>
<div class="t" style="left:267.30px;top:210.30px;font-size:7.56px;line-height:10px;color:#707070;transform:scaleX(0.9);transform-origin:0 50%;">Номер заказа</div>
<div class="t" style="left:374.80px;top:210.30px;font-size:7.56px;line-height:10px;color:#707070;transform:scaleX(0.9);transform-origin:0 50%;">Количество</div>
<div class="t" style="left:477.70px;top:210.30px;font-size:7.56px;line-height:10px;color:#707070;transform:scaleX(0.9);transform-origin:0 50%;">Цена</div>
<div class="t" style="left:540.20px;top:210.30px;font-size:7.56px;line-height:10px;color:#707070;transform:scaleX(0.9);transform-origin:0 50%;">Сумма</div>
<div class="t" style="left:602.70px;top:210.30px;font-size:7.56px;line-height:10px;color:#707070;transform:scaleX(0.9);transform-origin:0 50%;">% НДС</div>
<div class="t" style="left:654.50px;top:210.30px;font-size:7.56px;line-height:10px;color:#707070;transform:scaleX(0.9);transform-origin:0 50%;">НДС</div>
<div class="t" style="left:717.00px;top:210.30px;font-size:7.56px;line-height:10px;color:#707070;transform:scaleX(0.9);transform-origin:0 50%;">Всего</div>
<div class="t" style="left:779.00px;top:210.30px;font-size:7.56px;line-height:10px;color:#707070;transform:scaleX(0.9);transform-origin:0 50%;">Счет учета</div>
<div class="t" style="left:834.50px;top:210.30px;font-size:7.56px;line-height:10px;color:#707070;transform:scaleX(0.9);transform-origin:0 50%;">Счет передачи</div>
<div class="t" style="left:905.30px;top:210.30px;font-size:7.56px;line-height:10px;color:#707070;transform:scaleX(0.9);transform-origin:0 50%;">Счет доходов</div>
<div class="t" style="left:972.20px;top:210.30px;font-size:7.56px;line-height:10px;color:#707070;transform:scaleX(0.9);transform-origin:0 50%;">Субконто</div>
<div class="r" style="left:0;top:0;width:1024px;height:560px;overflow:hidden;pointer-events:none">
</div>
<div class="r" style="left:112.30px;top:223.00px;width:894.70px;height:15.52px;background:#e4f2cf"></div>
<div class="r" style="left:112.30px;top:237.72px;width:894.70px;height:0.80px;background:#f4f9ec"></div>
<div class="r" style="left:262.60px;top:223.00px;width:0.80px;height:15.52px;background:#f0f7e6"></div>
<div class="r" style="left:369.90px;top:223.00px;width:0.80px;height:15.52px;background:#f0f7e6"></div>
<div class="r" style="left:473.20px;top:223.00px;width:0.80px;height:15.52px;background:#f0f7e6"></div>
<div class="r" style="left:535.70px;top:223.00px;width:0.80px;height:15.52px;background:#f0f7e6"></div>
<div class="r" style="left:598.20px;top:223.00px;width:0.80px;height:15.52px;background:#f0f7e6"></div>
<div class="r" style="left:649.60px;top:223.00px;width:0.80px;height:15.52px;background:#f0f7e6"></div>
<div class="r" style="left:712.70px;top:223.00px;width:0.80px;height:15.52px;background:#f0f7e6"></div>
<div class="r" style="left:774.60px;top:223.00px;width:0.80px;height:15.52px;background:#f0f7e6"></div>
<div class="r" style="left:829.70px;top:223.00px;width:0.80px;height:15.52px;background:#f0f7e6"></div>
<div class="r" style="left:900.50px;top:223.00px;width:0.80px;height:15.52px;background:#f0f7e6"></div>
<div class="r" style="left:967.20px;top:223.00px;width:0.80px;height:15.52px;background:#f0f7e6"></div>
<div class="t" style="left:-157.40px;width:300px;text-align:right;top:226.56px;font-size:7.56px;line-height:10px;color:#3d3d3d;transform:scaleX(0.9);transform-origin:100% 50%;">1</div>
<div class="t" style="left:151.90px;top:226.56px;font-size:7.56px;line-height:10px;color:#3d3d3d;transform:scaleX(0.9);transform-origin:0 50%;">Белочка</div>
<div class="t" style="left:267.30px;top:226.56px;font-size:7.56px;line-height:10px;color:#3d3d3d;transform:scaleX(0.9);transform-origin:0 50%;">564321122</div>
<div class="t" style="left:127.70px;width:300px;text-align:right;top:226.56px;font-size:7.56px;line-height:10px;color:#3d3d3d;transform:scaleX(0.9);transform-origin:100% 50%;">60,000</div>
<div class="t" style="left:436.70px;top:226.56px;font-size:7.56px;line-height:10px;color:#3d3d3d;transform:scaleX(0.9);transform-origin:0 50%;">шт</div>
<div class="t" style="left:231.30px;width:300px;text-align:right;top:226.56px;font-size:7.56px;line-height:10px;color:#3d3d3d;transform:scaleX(0.9);transform-origin:100% 50%;">350,00</div>
<div class="t" style="left:293.40px;width:300px;text-align:right;top:226.56px;font-size:7.56px;line-height:10px;color:#3d3d3d;transform:scaleX(0.9);transform-origin:100% 50%;">21 000,00</div>
<div class="t" style="left:602.70px;top:226.56px;font-size:7.56px;line-height:10px;color:#3d3d3d;transform:scaleX(0.9);transform-origin:0 50%;">20%</div>
<div class="t" style="left:407.60px;width:300px;text-align:right;top:226.56px;font-size:7.56px;line-height:10px;color:#3d3d3d;transform:scaleX(0.9);transform-origin:100% 50%;">3 500,00</div>
<div class="t" style="left:469.70px;width:300px;text-align:right;top:226.56px;font-size:7.56px;line-height:10px;color:#3d3d3d;transform:scaleX(0.9);transform-origin:100% 50%;">21 000,00</div>
<div class="t" style="left:779.00px;top:226.56px;font-size:7.56px;line-height:10px;color:#3d3d3d;transform:scaleX(0.9);transform-origin:0 50%;">43</div>
<div class="t" style="left:834.50px;top:226.56px;font-size:7.56px;line-height:10px;color:#3d3d3d;transform:scaleX(0.9);transform-origin:0 50%;">45.02</div>
<div class="t" style="left:905.30px;top:226.56px;font-size:7.56px;line-height:10px;color:#3d3d3d;transform:scaleX(0.9);transform-origin:0 50%;">90.01.1</div>
<div class="t" style="left:972.2px;top:225.96px;width:35px;overflow:hidden;font-size:6.8px;line-height:10px;color:#3d3d3d">Основная номенклатура</div>
<div class="r" style="left:112.30px;top:238.52px;width:894.70px;height:15.52px;background:#e4f2cf"></div>
<div class="r" style="left:112.30px;top:253.24px;width:894.70px;height:0.80px;background:#f4f9ec"></div>
<div class="r" style="left:262.60px;top:238.52px;width:0.80px;height:15.52px;background:#f0f7e6"></div>
<div class="r" style="left:369.90px;top:238.52px;width:0.80px;height:15.52px;background:#f0f7e6"></div>
<div class="r" style="left:473.20px;top:238.52px;width:0.80px;height:15.52px;background:#f0f7e6"></div>
<div class="r" style="left:535.70px;top:238.52px;width:0.80px;height:15.52px;background:#f0f7e6"></div>
<div class="r" style="left:598.20px;top:238.52px;width:0.80px;height:15.52px;background:#f0f7e6"></div>
<div class="r" style="left:649.60px;top:238.52px;width:0.80px;height:15.52px;background:#f0f7e6"></div>
<div class="r" style="left:712.70px;top:238.52px;width:0.80px;height:15.52px;background:#f0f7e6"></div>
<div class="r" style="left:774.60px;top:238.52px;width:0.80px;height:15.52px;background:#f0f7e6"></div>
<div class="r" style="left:829.70px;top:238.52px;width:0.80px;height:15.52px;background:#f0f7e6"></div>
<div class="r" style="left:900.50px;top:238.52px;width:0.80px;height:15.52px;background:#f0f7e6"></div>
<div class="r" style="left:967.20px;top:238.52px;width:0.80px;height:15.52px;background:#f0f7e6"></div>
<div class="t" style="left:-157.40px;width:300px;text-align:right;top:242.08px;font-size:7.56px;line-height:10px;color:#3d3d3d;transform:scaleX(0.9);transform-origin:100% 50%;">2</div>
<div class="t" style="left:151.90px;top:242.08px;font-size:7.56px;line-height:10px;color:#3d3d3d;transform:scaleX(0.9);transform-origin:0 50%;">Ассорти</div>
<div class="t" style="left:267.30px;top:242.08px;font-size:7.56px;line-height:10px;color:#3d3d3d;transform:scaleX(0.9);transform-origin:0 50%;">564321122</div>
<div class="t" style="left:127.70px;width:300px;text-align:right;top:242.08px;font-size:7.56px;line-height:10px;color:#3d3d3d;transform:scaleX(0.9);transform-origin:100% 50%;">70,000</div>
<div class="t" style="left:436.70px;top:242.08px;font-size:7.56px;line-height:10px;color:#3d3d3d;transform:scaleX(0.9);transform-origin:0 50%;">шт</div>
<div class="t" style="left:231.30px;width:300px;text-align:right;top:242.08px;font-size:7.56px;line-height:10px;color:#3d3d3d;transform:scaleX(0.9);transform-origin:100% 50%;">450,00</div>
<div class="t" style="left:293.40px;width:300px;text-align:right;top:242.08px;font-size:7.56px;line-height:10px;color:#3d3d3d;transform:scaleX(0.9);transform-origin:100% 50%;">31 500,00</div>
<div class="t" style="left:602.70px;top:242.08px;font-size:7.56px;line-height:10px;color:#3d3d3d;transform:scaleX(0.9);transform-origin:0 50%;">20%</div>
<div class="t" style="left:407.60px;width:300px;text-align:right;top:242.08px;font-size:7.56px;line-height:10px;color:#3d3d3d;transform:scaleX(0.9);transform-origin:100% 50%;">5 250,00</div>
<div class="t" style="left:469.70px;width:300px;text-align:right;top:242.08px;font-size:7.56px;line-height:10px;color:#3d3d3d;transform:scaleX(0.9);transform-origin:100% 50%;">31 500,00</div>
<div class="t" style="left:779.00px;top:242.08px;font-size:7.56px;line-height:10px;color:#3d3d3d;transform:scaleX(0.9);transform-origin:0 50%;">43</div>
<div class="t" style="left:834.50px;top:242.08px;font-size:7.56px;line-height:10px;color:#3d3d3d;transform:scaleX(0.9);transform-origin:0 50%;">45.02</div>
<div class="t" style="left:905.30px;top:242.08px;font-size:7.56px;line-height:10px;color:#3d3d3d;transform:scaleX(0.9);transform-origin:0 50%;">90.01.1</div>
<div class="t" style="left:972.2px;top:241.48px;width:35px;overflow:hidden;font-size:6.8px;line-height:10px;color:#3d3d3d">Основная номенклатура</div>
<div class="r" style="left:112.30px;top:254.04px;width:894.70px;height:15.52px;background:#e4f2cf"></div>
<div class="r" style="left:112.30px;top:268.76px;width:894.70px;height:0.80px;background:#f4f9ec"></div>
<div class="r" style="left:262.60px;top:254.04px;width:0.80px;height:15.52px;background:#f0f7e6"></div>
<div class="r" style="left:369.90px;top:254.04px;width:0.80px;height:15.52px;background:#f0f7e6"></div>
<div class="r" style="left:473.20px;top:254.04px;width:0.80px;height:15.52px;background:#f0f7e6"></div>
<div class="r" style="left:535.70px;top:254.04px;width:0.80px;height:15.52px;background:#f0f7e6"></div>
<div class="r" style="left:598.20px;top:254.04px;width:0.80px;height:15.52px;background:#f0f7e6"></div>
<div class="r" style="left:649.60px;top:254.04px;width:0.80px;height:15.52px;background:#f0f7e6"></div>
<div class="r" style="left:712.70px;top:254.04px;width:0.80px;height:15.52px;background:#f0f7e6"></div>
<div class="r" style="left:774.60px;top:254.04px;width:0.80px;height:15.52px;background:#f0f7e6"></div>
<div class="r" style="left:829.70px;top:254.04px;width:0.80px;height:15.52px;background:#f0f7e6"></div>
<div class="r" style="left:900.50px;top:254.04px;width:0.80px;height:15.52px;background:#f0f7e6"></div>
<div class="r" style="left:967.20px;top:254.04px;width:0.80px;height:15.52px;background:#f0f7e6"></div>
<div class="r" style="left:147.20px;top:254.64px;width:115.20px;height:14.52px;background:#c9e3a0;border:1px solid #a0cf62;box-sizing:border-box"></div>
<div class="t" style="left:-157.40px;width:300px;text-align:right;top:257.60px;font-size:7.56px;line-height:10px;color:#3d3d3d;transform:scaleX(0.9);transform-origin:100% 50%;">3</div>
<div class="t" style="left:151.90px;top:257.60px;font-size:7.56px;line-height:10px;color:#3d3d3d;transform:scaleX(0.9);transform-origin:0 50%;">Барбарис</div>
<div class="t" style="left:267.30px;top:257.60px;font-size:7.56px;line-height:10px;color:#3d3d3d;transform:scaleX(0.9);transform-origin:0 50%;">574483321</div>
<div class="t" style="left:127.70px;width:300px;text-align:right;top:257.60px;font-size:7.56px;line-height:10px;color:#3d3d3d;transform:scaleX(0.9);transform-origin:100% 50%;">50,000</div>
<div class="t" style="left:436.70px;top:257.60px;font-size:7.56px;line-height:10px;color:#3d3d3d;transform:scaleX(0.9);transform-origin:0 50%;">шт</div>
<div class="t" style="left:231.30px;width:300px;text-align:right;top:257.60px;font-size:7.56px;line-height:10px;color:#3d3d3d;transform:scaleX(0.9);transform-origin:100% 50%;">200,00</div>
<div class="t" style="left:293.40px;width:300px;text-align:right;top:257.60px;font-size:7.56px;line-height:10px;color:#3d3d3d;transform:scaleX(0.9);transform-origin:100% 50%;">10 000,00</div>
<div class="t" style="left:602.70px;top:257.60px;font-size:7.56px;line-height:10px;color:#3d3d3d;transform:scaleX(0.9);transform-origin:0 50%;">20%</div>
<div class="t" style="left:407.60px;width:300px;text-align:right;top:257.60px;font-size:7.56px;line-height:10px;color:#3d3d3d;transform:scaleX(0.9);transform-origin:100% 50%;">1 666,67</div>
<div class="t" style="left:469.70px;width:300px;text-align:right;top:257.60px;font-size:7.56px;line-height:10px;color:#3d3d3d;transform:scaleX(0.9);transform-origin:100% 50%;">10 000,00</div>
<div class="t" style="left:779.00px;top:257.60px;font-size:7.56px;line-height:10px;color:#3d3d3d;transform:scaleX(0.9);transform-origin:0 50%;">43</div>
<div class="t" style="left:834.50px;top:257.60px;font-size:7.56px;line-height:10px;color:#3d3d3d;transform:scaleX(0.9);transform-origin:0 50%;">45.02</div>
<div class="t" style="left:905.30px;top:257.60px;font-size:7.56px;line-height:10px;color:#3d3d3d;transform:scaleX(0.9);transform-origin:0 50%;">90.01.1</div>
<div class="t" style="left:972.2px;top:257.00px;width:35px;overflow:hidden;font-size:6.8px;line-height:10px;color:#3d3d3d">Основная номенклатура</div>
<div class="r" style="left:112.30px;top:284.28px;width:894.70px;height:0.80px;background:#ececec"></div>
<div class="t" style="left:-157.40px;width:300px;text-align:right;top:273.12px;font-size:7.56px;line-height:10px;color:#3d3d3d;transform:scaleX(0.9);transform-origin:100% 50%;">4</div>
<div class="t" style="left:151.90px;top:273.12px;font-size:7.56px;line-height:10px;color:#3d3d3d;transform:scaleX(0.9);transform-origin:0 50%;">Вишня в коньяке</div>
<div class="t" style="left:267.30px;top:273.12px;font-size:7.56px;line-height:10px;color:#3d3d3d;transform:scaleX(0.9);transform-origin:0 50%;">574483321</div>
<div class="t" style="left:127.70px;width:300px;text-align:right;top:273.12px;font-size:7.56px;line-height:10px;color:#3d3d3d;transform:scaleX(0.9);transform-origin:100% 50%;">70,000</div>
<div class="t" style="left:436.70px;top:273.12px;font-size:7.56px;line-height:10px;color:#3d3d3d;transform:scaleX(0.9);transform-origin:0 50%;">шт</div>
<div class="t" style="left:231.30px;width:300px;text-align:right;top:273.12px;font-size:7.56px;line-height:10px;color:#3d3d3d;transform:scaleX(0.9);transform-origin:100% 50%;">500,00</div>
<div class="t" style="left:293.40px;width:300px;text-align:right;top:273.12px;font-size:7.56px;line-height:10px;color:#3d3d3d;transform:scaleX(0.9);transform-origin:100% 50%;">35 000,00</div>
<div class="t" style="left:602.70px;top:273.12px;font-size:7.56px;line-height:10px;color:#3d3d3d;transform:scaleX(0.9);transform-origin:0 50%;">20%</div>
<div class="t" style="left:407.60px;width:300px;text-align:right;top:273.12px;font-size:7.56px;line-height:10px;color:#3d3d3d;transform:scaleX(0.9);transform-origin:100% 50%;">5 833,33</div>
<div class="t" style="left:469.70px;width:300px;text-align:right;top:273.12px;font-size:7.56px;line-height:10px;color:#3d3d3d;transform:scaleX(0.9);transform-origin:100% 50%;">35 000,00</div>
<div class="t" style="left:779.00px;top:273.12px;font-size:7.56px;line-height:10px;color:#3d3d3d;transform:scaleX(0.9);transform-origin:0 50%;">43</div>
<div class="t" style="left:834.50px;top:273.12px;font-size:7.56px;line-height:10px;color:#3d3d3d;transform:scaleX(0.9);transform-origin:0 50%;">45.02</div>
<div class="t" style="left:905.30px;top:273.12px;font-size:7.56px;line-height:10px;color:#3d3d3d;transform:scaleX(0.9);transform-origin:0 50%;">90.01.1</div>
<div class="t" style="left:972.2px;top:272.52px;width:35px;overflow:hidden;font-size:6.8px;line-height:10px;color:#3d3d3d">Основная номенклатура</div>
<div class="r" style="left:112.30px;top:299.80px;width:894.70px;height:0.80px;background:#ececec"></div>
<div class="t" style="left:-157.40px;width:300px;text-align:right;top:288.64px;font-size:7.56px;line-height:10px;color:#3d3d3d;transform:scaleX(0.9);transform-origin:100% 50%;">5</div>
<div class="t" style="left:151.90px;top:288.64px;font-size:7.56px;line-height:10px;color:#3d3d3d;transform:scaleX(0.9);transform-origin:0 50%;">Грильяж</div>
<div class="t" style="left:267.30px;top:288.64px;font-size:7.56px;line-height:10px;color:#3d3d3d;transform:scaleX(0.9);transform-origin:0 50%;">577863241</div>
<div class="t" style="left:127.70px;width:300px;text-align:right;top:288.64px;font-size:7.56px;line-height:10px;color:#3d3d3d;transform:scaleX(0.9);transform-origin:100% 50%;">50,000</div>
<div class="t" style="left:436.70px;top:288.64px;font-size:7.56px;line-height:10px;color:#3d3d3d;transform:scaleX(0.9);transform-origin:0 50%;">шт</div>
<div class="t" style="left:231.30px;width:300px;text-align:right;top:288.64px;font-size:7.56px;line-height:10px;color:#3d3d3d;transform:scaleX(0.9);transform-origin:100% 50%;">300,00</div>
<div class="t" style="left:293.40px;width:300px;text-align:right;top:288.64px;font-size:7.56px;line-height:10px;color:#3d3d3d;transform:scaleX(0.9);transform-origin:100% 50%;">15 000,00</div>
<div class="t" style="left:602.70px;top:288.64px;font-size:7.56px;line-height:10px;color:#3d3d3d;transform:scaleX(0.9);transform-origin:0 50%;">20%</div>
<div class="t" style="left:407.60px;width:300px;text-align:right;top:288.64px;font-size:7.56px;line-height:10px;color:#3d3d3d;transform:scaleX(0.9);transform-origin:100% 50%;">2 500,00</div>
<div class="t" style="left:469.70px;width:300px;text-align:right;top:288.64px;font-size:7.56px;line-height:10px;color:#3d3d3d;transform:scaleX(0.9);transform-origin:100% 50%;">15 000,00</div>
<div class="t" style="left:779.00px;top:288.64px;font-size:7.56px;line-height:10px;color:#3d3d3d;transform:scaleX(0.9);transform-origin:0 50%;">43</div>
<div class="t" style="left:834.50px;top:288.64px;font-size:7.56px;line-height:10px;color:#3d3d3d;transform:scaleX(0.9);transform-origin:0 50%;">45.02</div>
<div class="t" style="left:905.30px;top:288.64px;font-size:7.56px;line-height:10px;color:#3d3d3d;transform:scaleX(0.9);transform-origin:0 50%;">90.01.1</div>
<div class="t" style="left:972.2px;top:288.04px;width:35px;overflow:hidden;font-size:6.8px;line-height:10px;color:#3d3d3d">Основная номенклатура</div>
<div class="r" style="left:112.30px;top:315.32px;width:894.70px;height:0.80px;background:#ececec"></div>
<div class="t" style="left:-157.40px;width:300px;text-align:right;top:304.16px;font-size:7.56px;line-height:10px;color:#3d3d3d;transform:scaleX(0.9);transform-origin:100% 50%;">6</div>
<div class="t" style="left:151.90px;top:304.16px;font-size:7.56px;line-height:10px;color:#3d3d3d;transform:scaleX(0.9);transform-origin:0 50%;">Мишка</div>
<div class="t" style="left:267.30px;top:304.16px;font-size:7.56px;line-height:10px;color:#3d3d3d;transform:scaleX(0.9);transform-origin:0 50%;">578463522</div>
<div class="t" style="left:127.70px;width:300px;text-align:right;top:304.16px;font-size:7.56px;line-height:10px;color:#3d3d3d;transform:scaleX(0.9);transform-origin:100% 50%;">60,000</div>
<div class="t" style="left:436.70px;top:304.16px;font-size:7.56px;line-height:10px;color:#3d3d3d;transform:scaleX(0.9);transform-origin:0 50%;">шт</div>
<div class="t" style="left:231.30px;width:300px;text-align:right;top:304.16px;font-size:7.56px;line-height:10px;color:#3d3d3d;transform:scaleX(0.9);transform-origin:100% 50%;">350,00</div>
<div class="t" style="left:293.40px;width:300px;text-align:right;top:304.16px;font-size:7.56px;line-height:10px;color:#3d3d3d;transform:scaleX(0.9);transform-origin:100% 50%;">21 000,00</div>
<div class="t" style="left:602.70px;top:304.16px;font-size:7.56px;line-height:10px;color:#3d3d3d;transform:scaleX(0.9);transform-origin:0 50%;">20%</div>
<div class="t" style="left:407.60px;width:300px;text-align:right;top:304.16px;font-size:7.56px;line-height:10px;color:#3d3d3d;transform:scaleX(0.9);transform-origin:100% 50%;">3 500,00</div>
<div class="t" style="left:469.70px;width:300px;text-align:right;top:304.16px;font-size:7.56px;line-height:10px;color:#3d3d3d;transform:scaleX(0.9);transform-origin:100% 50%;">21 000,00</div>
<div class="t" style="left:779.00px;top:304.16px;font-size:7.56px;line-height:10px;color:#3d3d3d;transform:scaleX(0.9);transform-origin:0 50%;">43</div>
<div class="t" style="left:834.50px;top:304.16px;font-size:7.56px;line-height:10px;color:#3d3d3d;transform:scaleX(0.9);transform-origin:0 50%;">45.02</div>
<div class="t" style="left:905.30px;top:304.16px;font-size:7.56px;line-height:10px;color:#3d3d3d;transform:scaleX(0.9);transform-origin:0 50%;">90.01.1</div>
<div class="t" style="left:972.2px;top:303.56px;width:35px;overflow:hidden;font-size:6.8px;line-height:10px;color:#3d3d3d">Основная номенклатура</div>
<div class="r" style="left:112.30px;top:330.84px;width:894.70px;height:0.80px;background:#ececec"></div>
<div class="t" style="left:-157.40px;width:300px;text-align:right;top:319.68px;font-size:7.56px;line-height:10px;color:#3d3d3d;transform:scaleX(0.9);transform-origin:100% 50%;">7</div>
<div class="t" style="left:151.90px;top:319.68px;font-size:7.56px;line-height:10px;color:#3d3d3d;transform:scaleX(0.9);transform-origin:0 50%;">Фруктовые</div>
<div class="t" style="left:267.30px;top:319.68px;font-size:7.56px;line-height:10px;color:#3d3d3d;transform:scaleX(0.9);transform-origin:0 50%;">543276436</div>
<div class="t" style="left:127.70px;width:300px;text-align:right;top:319.68px;font-size:7.56px;line-height:10px;color:#3d3d3d;transform:scaleX(0.9);transform-origin:100% 50%;">40,000</div>
<div class="t" style="left:436.70px;top:319.68px;font-size:7.56px;line-height:10px;color:#3d3d3d;transform:scaleX(0.9);transform-origin:0 50%;">шт</div>
<div class="t" style="left:231.30px;width:300px;text-align:right;top:319.68px;font-size:7.56px;line-height:10px;color:#3d3d3d;transform:scaleX(0.9);transform-origin:100% 50%;">250,00</div>
<div class="t" style="left:293.40px;width:300px;text-align:right;top:319.68px;font-size:7.56px;line-height:10px;color:#3d3d3d;transform:scaleX(0.9);transform-origin:100% 50%;">10 000,00</div>
<div class="t" style="left:602.70px;top:319.68px;font-size:7.56px;line-height:10px;color:#3d3d3d;transform:scaleX(0.9);transform-origin:0 50%;">20%</div>
<div class="t" style="left:407.60px;width:300px;text-align:right;top:319.68px;font-size:7.56px;line-height:10px;color:#3d3d3d;transform:scaleX(0.9);transform-origin:100% 50%;">1 666,67</div>
<div class="t" style="left:469.70px;width:300px;text-align:right;top:319.68px;font-size:7.56px;line-height:10px;color:#3d3d3d;transform:scaleX(0.9);transform-origin:100% 50%;">10 000,00</div>
<div class="t" style="left:779.00px;top:319.68px;font-size:7.56px;line-height:10px;color:#3d3d3d;transform:scaleX(0.9);transform-origin:0 50%;">43</div>
<div class="t" style="left:834.50px;top:319.68px;font-size:7.56px;line-height:10px;color:#3d3d3d;transform:scaleX(0.9);transform-origin:0 50%;">45.02</div>
<div class="t" style="left:905.30px;top:319.68px;font-size:7.56px;line-height:10px;color:#3d3d3d;transform:scaleX(0.9);transform-origin:0 50%;">90.01.1</div>
<div class="t" style="left:972.2px;top:319.08px;width:35px;overflow:hidden;font-size:6.8px;line-height:10px;color:#3d3d3d">Основная номенклатура</div>
<div class="r" style="left:262.60px;top:269.56px;width:0.80px;height:15.52px;background:#e6e6e6"></div>
<div class="r" style="left:262.60px;top:285.08px;width:0.80px;height:15.52px;background:#e6e6e6"></div>
<div class="r" style="left:262.60px;top:300.60px;width:0.80px;height:15.52px;background:#e6e6e6"></div>
<div class="r" style="left:262.60px;top:316.12px;width:0.80px;height:15.52px;background:#e6e6e6"></div>
<div class="r" style="left:117.00px;top:465.00px;width:2.00px;height:2.00px;background:#bbb"></div>
<div class="r" style="left:123.40px;top:464.00px;width:871.60px;height:4.00px;background:#dadada;border-radius:2px"></div>
<div class="r" style="left:123.40px;top:464.00px;width:546.90px;height:4.00px;background:#9c9c9c;border-radius:2px"></div>
<svg class="r" style="left:999px;top:464px" width="4" height="4" viewBox="0 0 4 4"><path d="M0.8 0.5 L3 2 L0.8 3.5 Z" fill="#333"/></svg>
<div class="r" style="left:107.00px;top:486.60px;width:16.40px;height:6.80px;background:#b3b3b3;border-radius:3.4px"></div>
<div class="r" style="left:105.5px;top:485.3px;width:9.6px;height:9.6px;border-radius:50%;background:#fff;border:0.8px solid #c8c8c8;box-sizing:border-box;box-shadow:0 0.5px 1px rgba(0,0,0,0.15)"></div>
<div class="t" style="left:127.80px;top:485.60px;font-size:7.56px;line-height:10px;color:#4a4a4a;transform:scaleX(0.9);transform-origin:0 50%;">УПД</div>
<div class="t" style="left:147.20px;top:485.60px;font-size:7.60px;line-height:10px;color:#3a5fb0;transform:scaleX(0.9);transform-origin:0 50%;text-decoration:underline;text-decoration-color:#8aa3d6">Реквизиты печатных форм и ЭДО</div>
<div class="t" style="left:260.60px;top:485.60px;font-size:7.56px;line-height:10px;color:#3a5fb0;transform:scaleX(0.9);transform-origin:0 50%;text-decoration:underline;text-decoration-color:#8aa3d6">Доставка</div>
<div class="r" style="left:296.60px;top:486.20px;width:8.10px;height:7.80px;background:#fff;border:1px solid #9a9a9a;border-radius:1px;box-sizing:border-box"></div>
<div class="t" style="left:307.50px;top:485.60px;font-size:7.72px;line-height:10px;color:#4a4a4a;transform:scaleX(0.9);transform-origin:0 50%;">Документ подписан</div>
<div class="r" style="left:775.50px;top:480.30px;width:238.40px;height:18.50px;background:#dcdcdc"></div>
<div class="t" style="left:777.50px;top:485.10px;font-size:7.56px;line-height:10px;color:#6a6a6a;transform:scaleX(0.9);transform-origin:0 50%;">Всего:</div>
<div class="t" style="left:569.00px;width:300px;text-align:right;top:485.10px;font-size:7.56px;line-height:10px;color:#4a4a4a;transform:scaleX(0.9);transform-origin:100% 50%;">143 500,00</div>
<div class="t" style="left:877.30px;top:485.10px;font-size:7.56px;line-height:10px;color:#4a4a4a;transform:scaleX(0.9);transform-origin:0 50%;">руб</div>
<div class="t" style="left:903.60px;top:485.10px;font-size:7.33px;line-height:10px;color:#6a6a6a;transform:scaleX(0.9);transform-origin:0 50%;">в т.ч.</div>
<div class="t" style="left:921.90px;top:485.10px;font-size:7.56px;line-height:10px;color:#6a6a6a;transform:scaleX(0.9);transform-origin:0 50%;">НДС:</div>
<div class="t" style="left:708.70px;width:300px;text-align:right;top:485.10px;font-size:7.56px;line-height:10px;color:#4a4a4a;transform:scaleX(0.9);transform-origin:100% 50%;">23 916,67</div>
<div class="t" style="left:108.10px;top:508.20px;font-size:7.56px;line-height:10px;color:#666666;transform:scaleX(0.9);transform-origin:0 50%;">Счет-фактура:</div>
<div class="t" style="left:161.70px;top:508.20px;font-size:7.56px;line-height:10px;color:#3a5fb0;transform:scaleX(0.9);transform-origin:0 50%;text-decoration:underline;text-decoration-color:#8aa3d6">18 от 31.08.2025</div>
<div class="t" style="left:378.00px;top:507.50px;font-size:8.00px;line-height:10px;color:#3a6ab8;transform:scaleX(0.9);transform-origin:0 50%;font-weight:bold">?</div>
<div class="t" style="left:105.00px;top:526.10px;font-size:7.56px;line-height:10px;color:#666666;transform:scaleX(0.9);transform-origin:0 50%;">Состояние ЭДО:</div>
<div class="t" style="left:161.70px;top:526.10px;font-size:7.56px;line-height:10px;color:#3a5fb0;transform:scaleX(0.9);transform-origin:0 50%;text-decoration:underline;text-decoration-color:#8aa3d6">Не начат</div>
<div class="t" style="left:105.00px;top:542.40px;font-size:7.56px;line-height:10px;color:#666666;transform:scaleX(0.9);transform-origin:0 50%;">Комментарий:</div>
<div class="r" style="left:161.00px;top:540.00px;width:218.00px;height:14.00px;background:#fff;border:1px solid #cfcfcf;border-top-color:#c4c4c4;border-radius:1.5px;box-sizing:border-box;box-shadow:inset 0 1px 1px rgba(0,0,0,0.05)"></div>
<div class="t" style="left:385.00px;top:542.50px;font-size:7.56px;line-height:10px;color:#666666;transform:scaleX(0.9);transform-origin:0 50%;">Ответственный:</div>
<div class="r" style="left:437.00px;top:540.00px;width:218.00px;height:14.00px;background:#fff;border:1px solid #cfcfcf;border-top-color:#c4c4c4;border-radius:1.5px;box-sizing:border-box;box-shadow:inset 0 1px 1px rgba(0,0,0,0.05)"></div>
<div class="r" style="left:633.00px;top:541.00px;width:1.00px;height:12.00px;background:#dcdcdc"></div>
<div class="r" style="left:644.00px;top:541.00px;width:1.00px;height:12.00px;background:#dcdcdc"></div>
<svg class="r" style="left:637.1px;top:545.8px" width="4" height="3" viewBox="0 0 4 3"><path d="M0.2 0.3 L3.2 0.3 L1.7 2 Z" fill="#555"/></svg>
<svg class="r" style="left:646.8px;top:544px" width="6" height="6" viewBox="0 0 6 6"><rect x="0.5" y="2.2" width="3.3" height="3.3" fill="none" stroke="#666" stroke-width="0.7"/><path d="M2 2 L2 0.5 L5.5 0.5 L5.5 3.8 L4 3.8" fill="none" stroke="#666" stroke-width="0.7"/></svg>
<div class="t" style="left:439.70px;top:542.50px;font-size:7.56px;line-height:10px;color:#3d3d3d;transform:scaleX(0.9);transform-origin:0 50%;">Абрамов Геннадий Сергеевич</div>
<div class="t" style="left:659.20px;top:542.10px;font-size:8.00px;line-height:10px;color:#3a6ab8;transform:scaleX(0.9);transform-origin:0 50%;font-weight:bold">?</div>
</body></html>
